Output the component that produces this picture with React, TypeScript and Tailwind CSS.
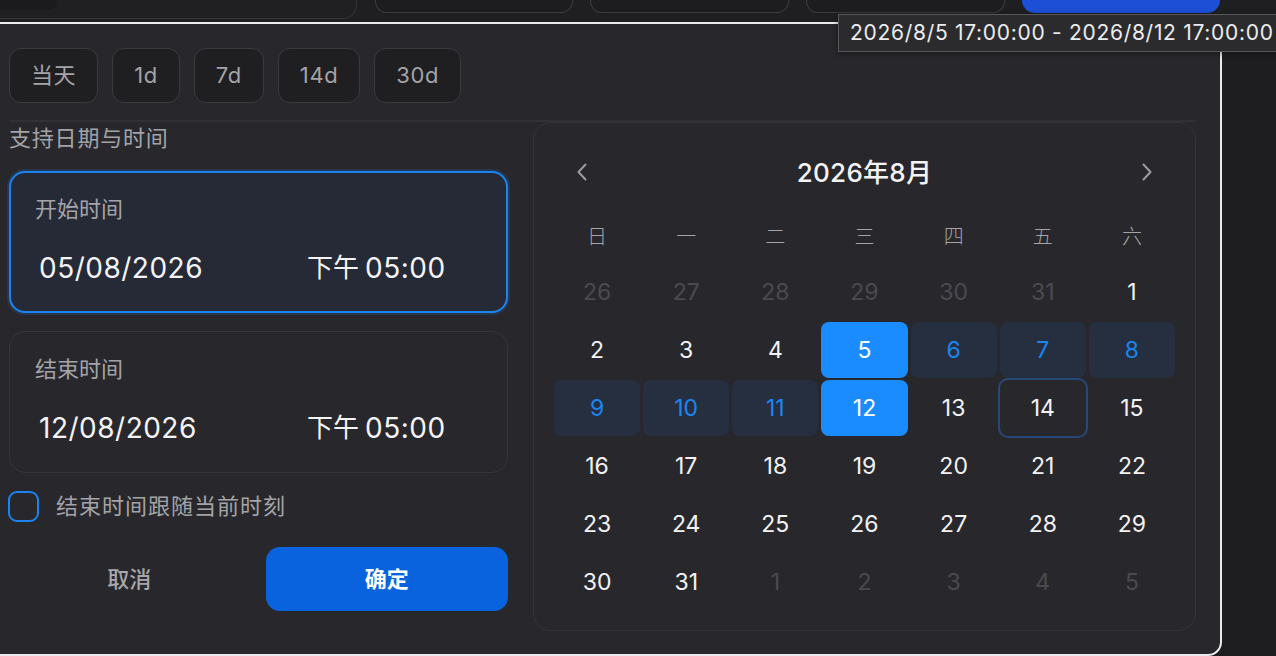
import React from "react";

type Kind = "muted" | "normal" | "range" | "sel" | "today";

const days: { d: number; k: Kind }[] = [
  ...[26, 27, 28, 29, 30, 31].map((d) => ({ d, k: "muted" as Kind })),
  { d: 1, k: "normal" },
  { d: 2, k: "normal" },
  { d: 3, k: "normal" },
  { d: 4, k: "normal" },
  { d: 5, k: "sel" },
  { d: 6, k: "range" },
  { d: 7, k: "range" },
  { d: 8, k: "range" },
  { d: 9, k: "range" },
  { d: 10, k: "range" },
  { d: 11, k: "range" },
  { d: 12, k: "sel" },
  { d: 13, k: "normal" },
  { d: 14, k: "today" },
  { d: 15, k: "normal" },
  ...Array.from({ length: 14 }, (_, i) => ({ d: 16 + i, k: "normal" as Kind })),
  { d: 30, k: "normal" },
  { d: 31, k: "normal" },
  ...[1, 2, 3, 4, 5].map((d) => ({ d, k: "muted" as Kind })),
];

const kindClass: Record<Kind, string> = {
  muted: "text-[#4a4a50]",
  normal: "text-[#f2f2f4]",
  range: "bg-[#262f3f] text-[#1c86f0]",
  sel: "bg-[#1a8cff] text-white",
  today: "text-[#f2f2f4] ring-2 ring-[#27487a]",
};

const weekdays = ["日", "一", "二", "三", "四", "五", "六"];
const quick = ["当天", "1d", "7d", "14d", "30d"];

function Chevron({ dir }: { dir: "left" | "right" }) {
  return (
    <svg width="14" height="22" viewBox="0 0 14 22" fill="none">
      <path
        d={dir === "left" ? "M10.5 3.5 L3.5 11 L10.5 18.5" : "M3.5 3.5 L10.5 11 L3.5 18.5"}
        stroke="#9b9ba1"
        strokeWidth="2"
        strokeLinecap="round"
        strokeLinejoin="round"
      />
    </svg>
  );
}

function TimeCard({
  label,
  date,
  active,
}: {
  label: string;
  date: string;
  active?: boolean;
}) {
  return (
    <div
      className={
        active
          ? "h-[142px] rounded-[16px] border-2 border-[#1c84f0] bg-[#262a36] pl-[24px] pt-[23px] shadow-[0_0_0_2px_rgba(28,132,240,0.18)]"
          : "h-[142px] rounded-[16px] border border-[#343439] bg-[#28282c] pl-[25px] pt-[24px]"
      }
    >
      <div className="text-[22px] leading-[26px] text-[#a3a3a8]">{label}</div>
      <div className="mt-[28px] ml-[4px] flex h-[36px] items-center text-[28px] leading-[36px] text-[#f4f4f6]">
        <span className="w-[268px] tracking-[0.5px]">{date}</span>
        <span className="text-[26px]">下午</span>
        <span className="ml-[6px] tracking-[0.5px]">05:00</span>
      </div>
    </div>
  );
}

export default function App() {
  return (
    <div className="relative h-[656px] w-[1276px] overflow-hidden bg-[#1e1e20] font-['Inter','Noto_Sans_CJK_SC',sans-serif]">
      {/* toolbar remnants above the popover */}
      <div className="flex h-[22px] items-start gap-[17px] bg-[#1f1f22]">
        <div className="relative h-[19px] w-[357px] rounded-br-[14px] border-b border-r border-[#333337] bg-[#202023]">
          <div className="h-[10px] w-[57px] rounded-br-[8px] bg-[#1b1b1d]" />
        </div>
        <div className="ml-[1px] h-[13px] w-[198px] rounded-b-[12px] border-x border-b border-[#3a3a3f] bg-[#1d1d20]" />
        <div className="h-[13px] w-[199px] rounded-b-[12px] border-x border-b border-[#3a3a3f] bg-[#1d1d20]" />
        <div className="h-[13px] w-[199px] rounded-b-[12px] border-x border-b border-[#3a3a3f] bg-[#1d1d20]" />
        <div className="h-[13px] w-[198px] rounded-b-[14px] bg-[#1c4fd6]" />
      </div>

      {/* popover */}
      <div className="-ml-[2px] h-[634px] w-[1224px] rounded-br-[14px] border-2 border-[#ebebed] bg-[#28282c] pl-[9px] pr-[24px] pt-[24px]">
        <div className="flex gap-[14px]">
          {quick.map((q) => (
            <div
              key={q}
              className="flex h-[55px] items-center rounded-[12px] border border-[#3a3a3f] bg-[#1f1f22] px-[21px] text-[22px] tracking-[0.6px] text-[#a3a3a8]"
            >
              {q}
            </div>
          ))}
        </div>

        <div className="mt-[17px] h-[2px] bg-[#303035]" />

        <div className="mt-[1px] flex gap-[25px]">
          {/* left column */}
          <div className="w-[499px] pt-[3px]">
            <div className="text-[22px] leading-[24px] tracking-[0.8px] text-[#a3a3a8]">支持日期与时间</div>
            <div className="mt-[21px]">
              <TimeCard label="开始时间" date="05/08/2026" active />
            </div>
            <div className="mt-[18px]">
              <TimeCard label="结束时间" date="12/08/2026" />
            </div>
            <div className="mt-[17px] flex items-center gap-[17px]">
              <div className="-ml-[1px] h-[31px] w-[31px] rounded-[9px] border-2 border-[#1c84f0]" />
              <span className="text-[22px] tracking-[1px] text-[#a3a3a8]">结束时间跟随当前时刻</span>
            </div>
            <div className="mt-[24px] grid grid-cols-2 gap-[18px]">
              <div className="flex h-[64px] items-center justify-center text-[22px] font-medium text-[#a6a6ab]">
                取消
              </div>
              <div className="-ml-[2px] flex h-[64px] items-center justify-center rounded-[14px] bg-[#0a63de] text-[22px] font-semibold text-white">
                确定
              </div>
            </div>
          </div>

          {/* calendar */}
          <div className="-mt-[1px] h-[509px] flex-1 rounded-[18px] border border-[#333338] bg-[#28282c] px-[20px] pt-[29px]">
            <div className="flex h-[40px] items-center justify-between px-[21px]">
              <Chevron dir="left" />
              <span className="text-[26px] font-medium tracking-[0.3px] text-[#f4f4f6]">2026年8月</span>
              <Chevron dir="right" />
            </div>
            <div className="mt-[25px] grid h-[40px] grid-cols-7 gap-x-[3px]">
              {weekdays.map((w) => (
                <div key={w} className="flex items-center justify-center text-[20px] font-light text-[#a3a3a8]">
                  {w}
                </div>
              ))}
            </div>
            <div className="mt-[7px] grid grid-cols-7 gap-x-[3px] gap-y-[2px]">
              {days.map((c, i) => (
                <div
                  key={i}
                  className={`flex h-[56px] items-center justify-center rounded-[8px] text-[23px] ${kindClass[c.k]}`}
                >
                  {c.d}
                </div>
              ))}
            </div>
          </div>
        </div>
      </div>

      {/* range tooltip */}
      <div className="absolute left-[838px] top-[14px] flex h-[38px] items-center whitespace-nowrap border border-[#56565b] bg-[#2b2b2d] pl-[11px] pr-[10px] text-[21px] tracking-[0.7px] text-[#ececee] shadow-[0_2px_6px_rgba(0,0,0,0.4)]">
        2026/8/5 17:00:00 - 2026/8/12 17:00:00
      </div>
    </div>
  );
}
